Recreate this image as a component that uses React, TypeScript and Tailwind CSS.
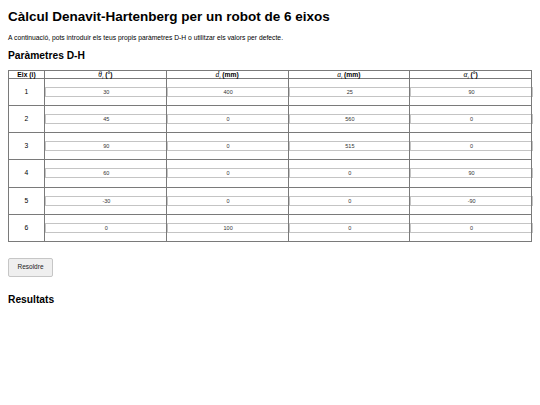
import React from "react";

const rows = [
  ["30", "400", "25", "90"],
  ["45", "0", "560", "0"],
  ["90", "0", "515", "0"],
  ["60", "0", "0", "90"],
  ["-30", "0", "0", "-90"],
  ["0", "100", "0", "0"],
];

function Sym({ s }: { s: string }) {
  return (
    <span className="font-normal italic text-[7.5px]" style={{ fontFamily: '"Liberation Serif", "DejaVu Serif", serif' }}>
      {s}
      <sub className="text-[4.5px] align-[-1px]">i</sub>
    </span>
  );
}

export default function App() {
  return (
    <div className="bg-white w-[540px] h-[405px] px-[8px] text-black" style={{ fontFamily: '"Liberation Sans", Arial, sans-serif' }}>
      <h1 className="pt-[9px] text-[13.5px] leading-[16px] font-bold">Càlcul Denavit-Hartenberg per un robot de 6 eixos</h1>
      <p className="mt-[9px] text-[6.75px] leading-[7px]">
        A continuació, pots introduir els teus propis paràmetres D-H o utilitzar els valors per defecte.
      </p>
      <h2 className="mt-[9px] text-[10.25px] leading-[12px] font-bold">Paràmetres D-H</h2>
      <table className="mt-[8px] w-[524px] table-fixed border-collapse border border-[#7a7a7a] text-[6.75px]">
        <colgroup>
          <col className="w-[36px]" />
          <col />
          <col />
          <col />
          <col />
        </colgroup>
        <thead>
          <tr>
            <th className="border border-[#7a7a7a] h-[8px] p-0 leading-[7px] font-bold">Eix (i)</th>
            <th className="border border-[#7a7a7a] p-0 leading-[7px] font-bold"><Sym s="θ" /> (°)</th>
            <th className="border border-[#7a7a7a] p-0 leading-[7px] font-bold"><Sym s="d" /> (mm)</th>
            <th className="border border-[#7a7a7a] p-0 leading-[7px] font-bold"><Sym s="a" /> (mm)</th>
            <th className="border border-[#7a7a7a] p-0 leading-[7px] font-bold"><Sym s="α" /> (°)</th>
          </tr>
        </thead>
        <tbody>
          {rows.map((r, i) => (
            <tr key={i}>
              <td className="border border-[#7a7a7a] text-center py-[8px] px-0 text-[6.75px]">{i + 1}</td>
              {r.map((v, j) => (
                <td key={j} className="border border-[#7a7a7a] py-[8px] px-0">
                  <input
                    readOnly
                    value={v}
                    className="block box-border w-[calc(100%+2px)] h-[10px] border border-[#c4c4c4] bg-white text-center text-[5.5px] text-[#333] outline-none p-0"
                    style={{ fontFamily: '"Liberation Sans", Arial, sans-serif' }}
                  />
                </td>
              ))}
            </tr>
          ))}
        </tbody>
      </table>
      <button className="mt-[16px] w-[45px] h-[19px] bg-[#efefef] border border-[#c6c6c6] rounded-[2px] text-[6.5px] text-[#222]">
        Resoldre
      </button>
      <h2 className="mt-[17px] text-[10.25px] leading-[12px] font-bold">Resultats</h2>
    </div>
  );
}
